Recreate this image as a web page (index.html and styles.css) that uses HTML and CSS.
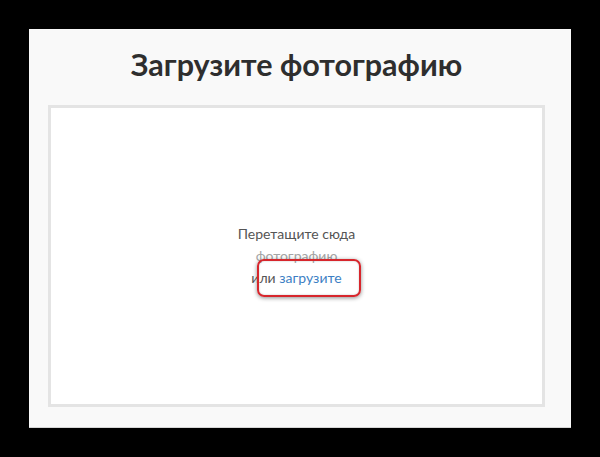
FILE: index.html
```html
<!DOCTYPE html>
<html lang="ru">
<head>
<meta charset="utf-8">
<title>Загрузите фотографию</title>
<link rel="stylesheet" href="styles.css">
</head>
<body>
<div class="panel">
  <h1 class="title">Загрузите фотографию</h1>
  <div class="dropzone">
    <div class="hint">
      <div class="line">Перетащите сюда</div>
      <div class="line faded">фотографию</div>
      <div class="line">или <span class="link-wrap"><a class="link" href="#">загрузите</a><span class="mark"></span></span></div>
    </div>
  </div>
</div>
</body>
</html>
```
FILE: styles.css
```css
html, body {
  margin: 0;
  padding: 0;
  background: #000;
}
body {
  width: 600px;
  height: 457px;
  overflow: hidden;
}
.panel {
  margin: 29px 0 0 29px;
  width: 542px;
  height: 399px;
  background: #f9f9f9;
  border-bottom: 1px solid #d6d6d6;
  box-sizing: border-box;
  padding: 0 26px 20px 19px;
  display: flex;
  flex-direction: column;
}
.title {
  margin: 0;
  height: 76px;
  display: flex;
  align-items: center;
  justify-content: center;
  font-family: "Lato", "Noto Sans", sans-serif;
  font-weight: 700;
  font-size: 30.5px;
  color: #2e2e2e;
  padding-bottom: 6px;
  box-sizing: border-box;
}
.dropzone {
  flex: 1;
  background: #fff;
  border: 3px solid #e4e4e4;
  display: flex;
  align-items: center;
  justify-content: center;
}
.hint {
  font-family: "Lato", "Noto Sans", sans-serif;
  font-size: 14px;
  line-height: 22px;
  color: #555;
  text-align: center;
}
.faded {
  color: #a5a5a5;
}
.link-wrap {
  position: relative;
}
.link {
  color: #3d7fc4;
  text-decoration: none;
}
.mark {
  position: absolute;
  left: -22px;
  right: -19px;
  top: -10px;
  bottom: -11px;
  border: 2.5px solid #d7262c;
  border-radius: 7px;
  box-shadow: 0 1px 4px rgba(0,0,0,0.45), inset 0 0 2px rgba(0,0,0,0.25);
}
```
